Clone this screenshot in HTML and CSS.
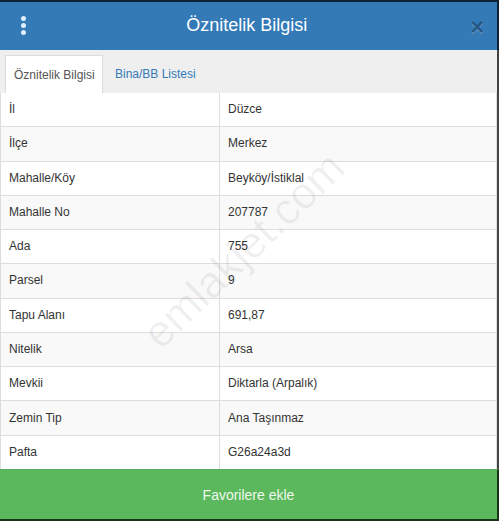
FILE: index.html
```html
<!DOCTYPE html>
<html lang="tr">
<head>
<meta charset="utf-8">
<title>Öznitelik Bilgisi</title>
<link rel="stylesheet" href="styles.css">
</head>
<body>
<div class="panel">
  <div class="header">
    <span class="kebab"><i></i><i></i><i></i></span>
    <h1 class="title">Öznitelik Bilgisi</h1>
    <span class="close">×</span>
  </div>
  <div class="tabs">
    <span class="tab active">Öznitelik Bilgisi</span>
    <span class="tab">Bina/BB Listesi</span>
  </div>
  <div class="body">
    <table class="attrs">
      <tr><td>İl</td><td>Düzce</td></tr>
      <tr><td>İlçe</td><td>Merkez</td></tr>
      <tr><td>Mahalle/Köy</td><td>Beyköy/İstiklal</td></tr>
      <tr><td>Mahalle No</td><td>207787</td></tr>
      <tr><td>Ada</td><td>755</td></tr>
      <tr><td>Parsel</td><td>9</td></tr>
      <tr><td>Tapu Alanı</td><td>691,87</td></tr>
      <tr><td>Nitelik</td><td>Arsa</td></tr>
      <tr><td>Mevkii</td><td>Diktarla (Arpalık)</td></tr>
      <tr><td>Zemin Tip</td><td>Ana Taşınmaz</td></tr>
      <tr><td>Pafta</td><td>G26a24a3d</td></tr>
    </table>
    <div class="watermark">emlakjet.com</div>
  </div>
  <div class="fav">Favorilere ekle</div>
</div>
</body>
</html>
```

FILE: styles.css
```css
html, body {
  margin: 0;
  padding: 0;
  background: #fff;
}
body {
  font-family: "Liberation Sans", Arial, sans-serif;
  color: #333;
  width: 499px;
  height: 521px;
  overflow: hidden;
}
.panel {
  width: 499px;
  display: flex;
  flex-direction: column;
}
.header {
  height: 48px;
  background: #337ab7;
  border-top: 2px solid rgba(0, 0, 0, 0.72);
  border-right: 2px solid rgba(0, 0, 0, 0.72);
  display: flex;
  align-items: center;
  position: relative;
}
.kebab {
  width: 6px;
  margin-left: 21px;
  display: flex;
  flex-direction: column;
  gap: 2px;
  margin-top: -2px;
}
.kebab i {
  display: block;
  width: 5px;
  height: 5px;
  border-radius: 50%;
  background: #dfeefa;
}
.title {
  flex: 1;
  margin: 0;
  text-align: center;
  font-size: 18px;
  font-weight: normal;
  color: #fff;
  margin-top: -2px;
  padding-right: 4px;
}
.close {
  font-size: 23px;
  font-weight: bold;
  line-height: 1;
  color: #000;
  text-shadow: 0 1px 0 #fff;
  opacity: 0.28;
  margin-right: 13px;
  margin-top: 3px;
}
.tabs {
  height: 43px;
  background: #efefef;
  border-right: 2px solid rgba(0, 0, 0, 0.72);
  display: flex;
  align-items: flex-end;
  padding-left: 5px;
  box-sizing: border-box;
}
.tab {
  height: 37px;
  line-height: 36px;
  font-size: 12px;
  color: #337ab7;
  padding: 0 10px 0 12px;
  box-sizing: border-box;
}
.tab.active {
  height: 38px;
  width: 98px;
  background: #fff;
  color: #555;
  border: 1px solid #ddd;
  border-bottom: none;
  padding: 0 0 0 8px;
  line-height: 38px;
}
.body {
  position: relative;
  border-right: 2px solid rgba(0, 0, 0, 0.72);
  background: #fff;
  overflow: hidden;
}
.attrs {
  width: 497px;
  height: 376px;
  border-collapse: collapse;
  font-size: 12px;
}
.attrs td {
  border: 1px solid #ddd;
  padding: 8px 8px;
  line-height: 17px;
}
.attrs td:first-child {
  width: 202px;
}
.attrs tr:nth-child(even) td {
  background: #f9f9f9;
}
.attrs tr:first-child td {
  border-top: none;
}
.attrs tr:last-child td {
  border-bottom: none;
}
.watermark {
  position: absolute;
  left: 114px;
  top: 132px;
  font-size: 44px;
  color: rgba(0, 0, 0, 0.06);
  transform: rotate(-44deg);
  transform-origin: center;
  white-space: nowrap;
  pointer-events: none;
}
.fav {
  background: #5cb85c;
  color: #eef8ee;
  font-size: 14px;
  display: flex;
  align-items: center;
  justify-content: center;
  border-top: 1px solid #58ad58;
  border-right: 2px solid rgba(0, 0, 0, 0.72);
  border-bottom: 2px solid rgba(0, 0, 0, 0.72);
  box-sizing: border-box;
  height: 52px;
  padding-top: 1px;
}
```
